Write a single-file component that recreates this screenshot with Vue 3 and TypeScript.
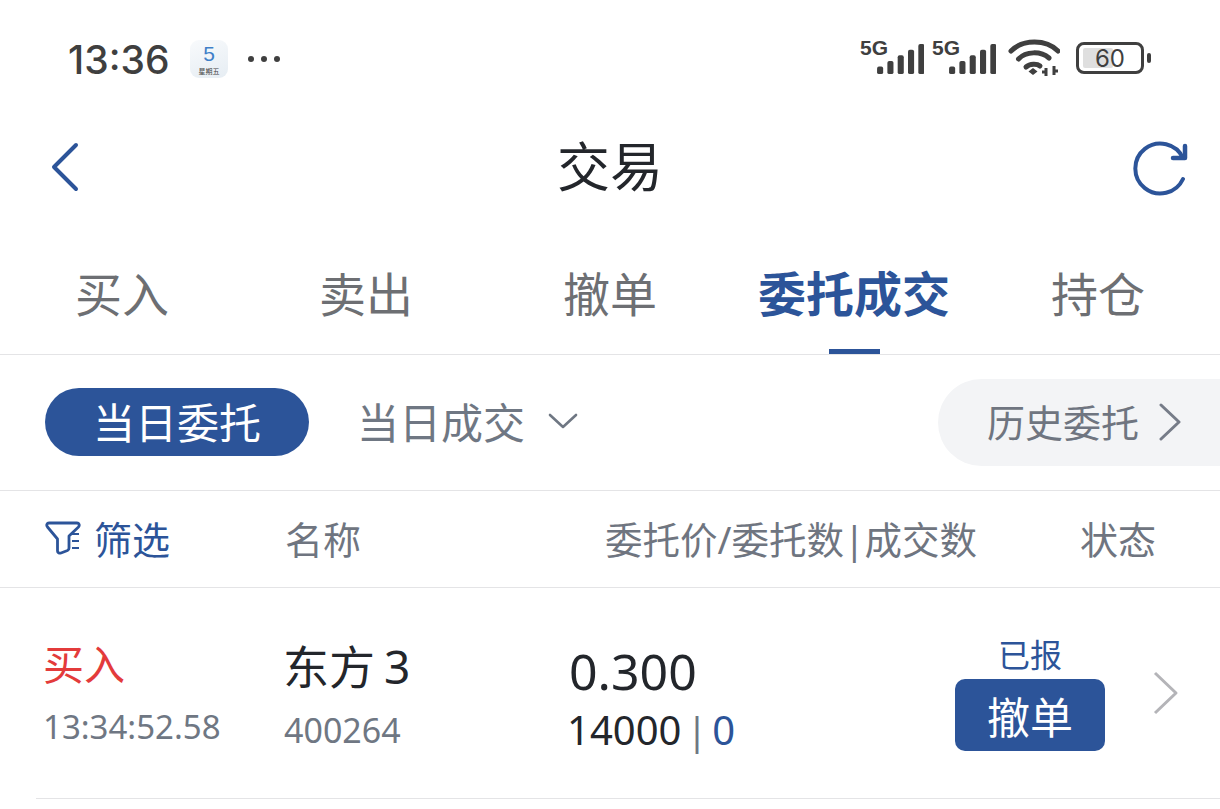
<script setup lang="ts">
const tabs = ['买入', '卖出', '撤单', '委托成交', '持仓']
const activeTab = '委托成交'
const signals = [0, 1]
const bars = [
  { x: 0, y: 24, h: 8 },
  { x: 11, y: 18, h: 14 },
  { x: 22, y: 12, h: 20 },
  { x: 33, y: 6, h: 26 },
  { x: 44, y: 0, h: 32 },
]
</script>

<template>
  <div class="page">
    <div class="status-bar">
      <span class="clock">13:36</span>
      <div class="app-badge">
        <span class="badge-day">5</span>
        <span class="badge-week">星期五</span>
      </div>
      <div class="dots"><i></i><i></i><i></i></div>
      <div class="status-right">
        <div v-for="s in signals" :key="s" class="signal">
          <span class="net">5G</span>
          <svg width="47" height="30" viewBox="0 0 50 32">
            <rect v-for="b in bars" :key="b.x" :x="b.x" :y="b.y" width="6.500" :height="b.h" rx="2" fill="#3f3f3f" />
          </svg>
        </div>
        <svg class="wifi" width="52" height="40" viewBox="0 0 52 40" fill="none">
          <path d="M3 13C15 1 38 1 50 13" stroke="#3f3f3f" stroke-width="5" stroke-linecap="round" />
          <path d="M10.500 21C18 13 33 13 41 20" stroke="#3f3f3f" stroke-width="5" stroke-linecap="round" />
          <path d="M18 29C22 25.500 29 25.500 32 28" stroke="#3f3f3f" stroke-width="5" stroke-linecap="round" />
          <path d="M20.500 33.500L25 30L29.500 33.500L25 37Z" fill="#3f3f3f" />
          <path d="M38 38V30M34 34H38M46 28V37M46 33H50" stroke="#3f3f3f" stroke-width="3" />
        </svg>
        <div class="battery">
          <div class="battery-body">
            <div class="battery-fill"></div>
            <span class="battery-num">60</span>
          </div>
          <div class="battery-tip"></div>
        </div>
      </div>
    </div>

    <div class="nav">
      <svg class="back" width="32" height="54" viewBox="0 0 32 54" fill="none">
        <path d="M28 5L6 27L28 49" stroke="#2c5499" stroke-width="4" stroke-linecap="round" stroke-linejoin="round" />
      </svg>
      <span class="title">交易</span>
      <svg class="refresh" width="56" height="56" viewBox="0 0 56 56" fill="none">
        <path d="M51 38A25 25 0 1 1 51 17" stroke="#2c5499" stroke-width="4" stroke-linecap="round" />
        <path d="M53 5V17H41" stroke="#2c5499" stroke-width="4.500" stroke-linecap="round" stroke-linejoin="round" />
      </svg>
    </div>

    <div class="tabs">
      <div v-for="t in tabs" :key="t" class="tab" :class="{ active: t === activeTab }">
        {{ t }}
        <span v-if="t === activeTab" class="tab-line"></span>
      </div>
    </div>

    <div class="filter-row">
      <div class="pill">当日委托</div>
      <div class="today-deal">
        <span>当日成交</span>
        <svg width="30" height="18" viewBox="0 0 30 18" fill="none">
          <path d="M2 3L15 15L28 3" stroke="#6f7783" stroke-width="2.600" stroke-linecap="round" stroke-linejoin="round" />
        </svg>
      </div>
      <div class="history">
        <span>历史委托</span>
        <svg width="24" height="38" viewBox="0 0 24 38" fill="none">
          <path d="M3 2L21 19L3 36" stroke="#767c88" stroke-width="3" stroke-linecap="round" stroke-linejoin="round" />
        </svg>
      </div>
    </div>

    <div class="head-row">
      <div class="head-filter">
        <svg width="36" height="36" viewBox="0 0 36 36" fill="none">
          <path d="M4 3H32C34 3 35 5 33.500 7L24 16V28C24 29 23.500 30 22.500 30.500L16 33C14 33.500 12.500 32.500 12.500 31V19L2.500 7C1 5 2 3 4 3Z" stroke="#2c5499" stroke-width="2.800" stroke-linejoin="round" />
          <path d="M27 14H34M27 21H34M27 28H34" stroke="#2c5499" stroke-width="2.200" />
        </svg>
        <span>筛选</span>
      </div>
      <div class="head-name">名称</div>
      <div class="head-price">委托价/委托数|成交数</div>
      <div class="head-state">状态</div>
    </div>

    <div class="order-row">
      <div class="col-side">
        <div class="side">买入</div>
        <div class="time">13:34:52.58</div>
      </div>
      <div class="col-name">
        <div class="name">东方<span class="digit">3</span></div>
        <div class="code">400264</div>
      </div>
      <div class="col-price">
        <div class="price">0.300</div>
        <div class="qty">14000<em>|</em><b>0</b></div>
      </div>
      <div class="col-state">
        <div class="state">已报</div>
        <div class="cancel">撤单</div>
      </div>
      <svg class="row-arrow" width="26" height="44" viewBox="0 0 26 44" fill="none">
        <path d="M2 2L23 22L2 42" stroke="#b4b4b8" stroke-width="3" stroke-linejoin="round" />
      </svg>
    </div>
  </div>
</template>

<style scoped>
.page {
  width: 1220px;
  height: 809px;
  overflow: hidden;
  background: #fff;
  font-family: "Noto Sans", "Noto Sans CJK SC", sans-serif;
  color: #23262b;
}
.status-bar {
  height: 118px;
  display: flex;
  align-items: center;
  padding: 0 69px 0 68px;
  box-sizing: border-box;
}
.clock {
  font-family: Inter, sans-serif;
  font-size: 39px;
  font-weight: 500;
  color: #3f3f3f;
  width: 122px;
}
.app-badge {
  width: 38px;
  height: 38px;
  border-radius: 9px;
  background: linear-gradient(160deg, #f8fafc, #e6edf3);
  display: flex;
  flex-direction: column;
  align-items: center;
}
.badge-day {
  font-family: "Liberation Sans", sans-serif;
  font-size: 21px;
  line-height: 21px;
  color: #3f7fc8;
  margin-top: 3px;
}
.badge-week {
  font-size: 7px;
  line-height: 10px;
  color: #444;
  margin-top: 2px;
  font-family: "Noto Sans CJK SC", sans-serif;
}
.dots {
  display: flex;
  gap: 7px;
  margin-left: 20px;
}
.dots i {
  width: 6px;
  height: 6px;
  border-radius: 50%;
  background: #3f3f3f;
}
.status-right {
  margin-left: auto;
  display: flex;
  align-items: center;
  margin-top: -2px;
}
.signal {
  display: flex;
  align-items: flex-end;
  justify-content: flex-end;
  width: 64px;
  height: 36px;
  padding-bottom: 2px;
  margin-right: 8px;
  box-sizing: border-box;
  position: relative;
}
.net {
  position: absolute;
  left: 0;
  top: -4px;
  font-family: "Liberation Sans", sans-serif;
  font-weight: 700;
  font-size: 21px;
  color: #3f3f3f;
}
.wifi {
  margin-left: 4px;
}
.battery {
  display: flex;
  align-items: center;
  margin-left: 16px;
}
.battery-body {
  width: 68px;
  height: 32px;
  border: 3px solid #3f3f3f;
  border-radius: 8px;
  box-sizing: border-box;
  position: relative;
  display: flex;
  align-items: center;
  justify-content: center;
}
.battery-fill {
  position: absolute;
  left: 4px;
  top: 3px;
  bottom: 3px;
  width: 30px;
  background: #dfdfdf;
  border-radius: 2px;
}
.battery-num {
  position: relative;
  font-family: Inter, sans-serif;
  font-size: 24px;
  color: #3f3f3f;
  line-height: 1;
  margin-top: 1px;
}
.battery-tip {
  width: 4px;
  height: 10px;
  background: #3f3f3f;
  border-radius: 2px;
  margin-left: 3px;
}
.nav {
  height: 97px;
  display: flex;
  align-items: center;
  justify-content: space-between;
  position: relative;
  padding: 0 32px 0 48px;
  box-sizing: border-box;
}
.title {
  position: absolute;
  left: 0;
  right: 0;
  text-align: center;
  font-size: 53px;
  line-height: 97px;
}
.refresh {
  margin-top: 4px;
}
.tabs {
  height: 140px;
  display: grid;
  grid-template-columns: repeat(5, 244px);
  border-bottom: 1px solid #e4e4e6;
  box-sizing: border-box;
}
.tab {
  position: relative;
  display: flex;
  justify-content: center;
  align-items: center;
  padding-top: 13px;
  box-sizing: border-box;
  font-size: 47px;
  color: #6d6f73;
}
.tab.active {
  color: #2c5499;
  font-size: 48px;
  font-weight: 700;
}
.tab-line {
  position: absolute;
  top: 134px;
  left: 97px;
  width: 51px;
  height: 5px;
  background: #2c5499;
}
.filter-row {
  height: 136px;
  display: flex;
  align-items: center;
  padding: 0 0 1px 45px;
  border-bottom: 1px solid #e4e4e6;
  box-sizing: border-box;
}
.pill {
  width: 264px;
  height: 68px;
  border-radius: 34px;
  background: #2c5499;
  color: #fff;
  font-size: 42px;
  display: flex;
  align-items: center;
  justify-content: center;
  padding-bottom: 3px;
  box-sizing: border-box;
}
.today-deal {
  margin-left: 48px;
  font-size: 42px;
  color: #6f7783;
  display: flex;
  align-items: center;
  gap: 23px;
}
.today-deal span {
  margin-top: -3px;
}
.today-deal svg {
  margin-top: -3px;
}
.history {
  margin-left: auto;
  width: 282px;
  height: 87px;
  border-radius: 44px 0 0 44px;
  background: #f3f4f6;
  color: #6f7580;
  font-size: 38px;
  display: flex;
  align-items: center;
  padding-left: 49px;
  gap: 19px;
  box-sizing: border-box;
}
.history span {
  margin-top: -3px;
}
.head-row {
  height: 97px;
  display: flex;
  align-items: center;
  padding-bottom: 3px;
  border-bottom: 1px solid #e4e4e6;
  box-sizing: border-box;
  font-size: 38px;
  color: #6f7580;
}
.head-filter {
  width: 285px;
  display: flex;
  align-items: center;
  padding-left: 45px;
  gap: 13px;
  box-sizing: border-box;
  color: #2c5499;
}
.head-name {
  width: 320px;
}
.head-price {
  width: 475px;
  font-size: 37.500px;
  white-space: nowrap;
}
.order-row {
  height: 211px;
  margin-left: 36px;
  display: flex;
  align-items: center;
  border-bottom: 1px solid #e4e4e6;
  box-sizing: border-box;
  position: relative;
}
.col-side {
  width: 247px;
  padding-left: 7px;
  box-sizing: border-box;
}
.side {
  font-size: 41px;
  color: #e33b3b;
  line-height: 56px;
}
.time {
  font-size: 33px;
  color: #6f7783;
  line-height: 46px;
  margin-top: 12px;
}
.col-name {
  width: 286px;
}
.name {
  font-size: 46px;
  line-height: 60px;
  color: #23262b;
  margin-top: 3px;
}
.digit {
  margin-left: 9px;
}
.code {
  font-size: 34px;
  color: #6f7783;
  line-height: 46px;
  margin: 11px 0 0 1px;
}
.col-price {
  width: 386px;
}
.price {
  font-size: 50px;
  line-height: 60px;
  margin-top: 11px;
}
.qty {
  font-size: 40px;
  line-height: 52px;
  margin: 3px 0 0 -2px;
}
.qty em {
  font-style: normal;
  color: #6f7783;
  font-size: 38px;
  margin: 0 5px;
}
.qty b {
  font-weight: 400;
  color: #2c5499;
}
.col-state {
  width: 150px;
  display: flex;
  flex-direction: column;
  align-items: center;
}
.state {
  font-size: 32px;
  line-height: 44px;
  color: #2c5499;
  margin-top: -2px;
}
.cancel {
  width: 150px;
  height: 72px;
  border-radius: 10px;
  background: #2c5499;
  color: #fff;
  font-size: 43px;
  display: flex;
  align-items: center;
  justify-content: center;
  margin-top: 2px;
}
.row-arrow {
  margin-left: 48px;
  margin-top: -1px;
}
</style>
